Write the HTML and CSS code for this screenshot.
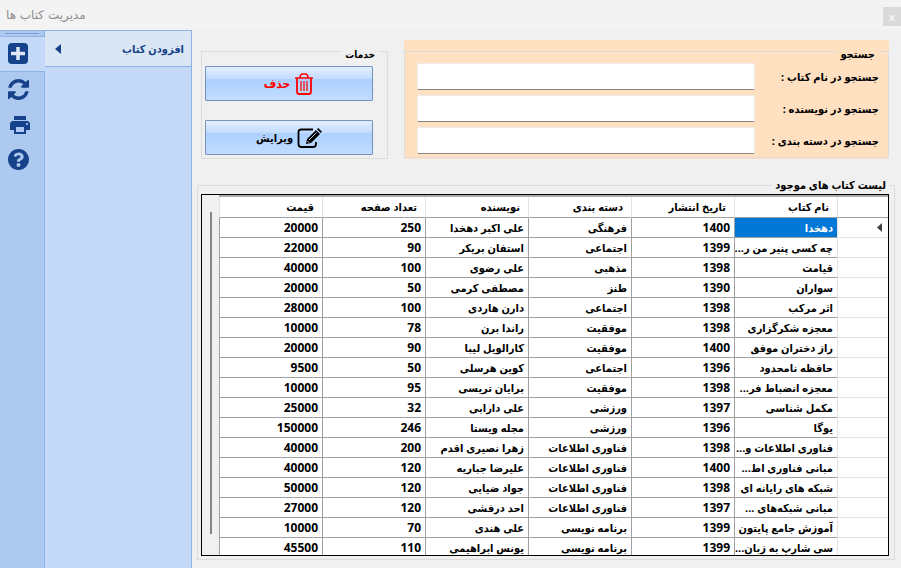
FILE: index.html
```html
<!DOCTYPE html>
<html lang="fa">
<head>
<meta charset="utf-8">
<title>مدیریت کتاب ها</title>
<link rel="stylesheet" href="styles.css">
</head>
<body>
<header class="titlebar">
  <h1 class="title" dir="rtl">مدیریت کتاب ها</h1>
  <button class="close" type="button">x</button>
</header>
<div class="shell">
  <nav class="tabs">
    <div class="grip"></div>
    <button class="tab tab-active" type="button" aria-label="افزودن">
      <svg width="22" height="22" viewBox="0 0 22 22"><rect x="1" y="0" width="20" height="21" rx="4" fill="#15428b"/><path d="M11 4v13M4 10.500h14" stroke="#dfe9f6" stroke-width="3.500"/></svg>
    </button>
    <button class="tab" type="button" aria-label="بازخوانی">
      <svg width="21" height="21" viewBox="0 0 1536 1536"><path fill="#15428b" d="M1511 928q0 5-1 7-64 268-268 434.500T764 1536q-146 0-282.500-55T238 1324l-129 129q-19 19-45 19t-45-19-19-45V960q0-26 19-45t45-19h448q26 0 45 19t19 45-19 45l-137 137q71 66 161 102t187 36q134 0 250-65t186-179q11-17 53-117 8-23 30-23h192q13 0 22.500 9.500t9.500 22.500zm25-800v448q0 26-19 45t-45 19h-448q-26 0-45-19t-19-45 19-45l138-138Q969 256 768 256q-134 0-250 65T332 500q-11 17-53 117-8 23-30 23H50q-13 0-22.500-9.500T18 608v-7q65-268 270-434.500T768 0q146 0 284 55.500T1297 212l130-129q19-19 45-19t45 19 19 45z"/></svg>
    </button>
    <button class="tab tab-print" type="button" aria-label="چاپ">
      <svg width="24" height="24" viewBox="0 0 24 24"><path fill="#15428b" d="M19 8H5c-1.660 0-3 1.340-3 3v6h4v4h12v-4h4v-6c0-1.660-1.340-3-3-3zm-3 11H8v-5h8v5zm3-7c-.55 0-1-.45-1-1s.45-1 1-1 1 .45 1 1-.45 1-1 1zm-1-9H6v4h12V3z"/></svg>
    </button>
    <button class="tab" type="button" aria-label="راهنما">
      <svg width="21" height="21" viewBox="8 8 496 496"><path fill="#15428b" d="M504 256c0 136.997-111.043 248-248 248S8 392.997 8 256C8 119.083 119.043 8 256 8s248 111.083 248 248zM262.655 90c-54.497 0-89.255 22.957-116.549 63.758-3.536 5.286-2.353 12.415 2.715 16.258l34.699 26.310c5.205 3.947 12.621 3.008 16.665-2.122 17.864-22.658 30.113-35.797 57.303-35.797 20.429 0 45.698 13.148 45.698 32.958 0 14.976-12.363 22.667-32.534 33.976C247.128 238.528 216 254.941 216 296v4c0 6.627 5.373 12 12 12h56c6.627 0 12-5.373 12-12v-1.333c0-28.462 83.186-29.647 83.186-106.667 0-58.002-60.165-102-116.531-102zM256 338c-25.365 0-46 20.635-46 46 0 25.364 20.635 46 46 46s46-20.636 46-46c0-25.365-20.635-46-46-46z"/></svg>
    </button>
  </nav>
  <aside class="menu">
    <button class="menu-item" type="button" dir="rtl">
      <span>افزودن کتاب</span>
      <svg width="6" height="10" viewBox="0 0 6 10"><path d="M6 0v10L0 5z" fill="#15428b"/></svg>
    </button>
  </aside>
  <main class="main">
    <div class="top">
      <fieldset class="group services" dir="rtl">
        <legend class="legend legend-small">خدمات</legend>
        <button class="action action-delete" type="button">
          <svg width="20" height="22" viewBox="0 0 20 22" fill="none" stroke="#f00"><path d="M1 5h18M6 5q0-4 3-4h2q3 0 3 4" stroke-width="1.500"/><path d="M3 5v13q0 3 2 3h10q2 0 2-3V5" stroke-width="1.800"/><path d="M7 8v10M10 8v10M13 8v10" stroke-width="1.200"/></svg>
          <span>حذف</span>
        </button>
        <button class="action" type="button">
          <svg width="25" height="20" viewBox="0 0 25 20"><path d="M16 1.500H4Q1.500 1.500 1.500 4v12q0 3 3 3H16q3 0 3-3v-2" fill="none" stroke="#000" stroke-width="1.800"/><path d="M9 16l1-5L19 2l4 4-9 9zM20 1.300L21.300 0 25 3.700l-1.300 1.300z"/><path d="M12 12l7.500-7.500" stroke="#bcd7fd"/><path d="M10.500 13l1.700 1.700" stroke="#bcd7fd"/></svg>
          <span>ویرایش</span>
        </button>
      </fieldset>
      <div class="search">
        <fieldset class="group search-group" dir="rtl">
          <legend class="legend legend-search">جستجو</legend>
          <div class="field"><label for="q-name">جستجو در نام کتاب :</label><input id="q-name" type="text"></div>
          <div class="field"><label for="q-author">جستجو در نویسنده :</label><input id="q-author" type="text"></div>
          <div class="field"><label for="q-cat">جستجو در دسته بندی :</label><input id="q-cat" type="text"></div>
        </fieldset>
      </div>
    </div>
    <section class="list" dir="rtl">
      <h2 class="list-title">لیست کتاب های موجود</h2>
      <div class="grid">
        <table class="books">
          <colgroup><col class="col-head"><col><col><col><col><col><col></colgroup>
          <thead>
            <tr><th class="mark"></th><th>نام کتاب</th><th>تاریخ انتشار</th><th>دسته بندی</th><th>نویسنده</th><th>تعداد صفحه</th><th>قیمت</th></tr>
          </thead>
          <tbody>
            <tr><td class="mark"><svg width="5" height="9" viewBox="0 0 5 9"><path d="M5 0v9L0 4.500z" fill="#404040"/></svg></td><td class="selected">دهخدا</td><td>1400</td><td>فرهنگی</td><td>علی اکبر دهخدا</td><td>250</td><td>20000</td></tr>
            <tr><td class="mark"></td><td>چه کسی پنیر من ر...</td><td>1399</td><td>اجتماعی</td><td>استفان بریکر</td><td>90</td><td>22000</td></tr>
            <tr><td class="mark"></td><td>قیامت</td><td>1398</td><td>مذهبی</td><td>علی رضوی</td><td>100</td><td>40000</td></tr>
            <tr><td class="mark"></td><td>سواران</td><td>1390</td><td>طنز</td><td>مصطفی کرمی</td><td>50</td><td>20000</td></tr>
            <tr><td class="mark"></td><td>اثر مرکب</td><td>1398</td><td>اجتماعی</td><td>دارن هاردی</td><td>100</td><td>28000</td></tr>
            <tr><td class="mark"></td><td>معجزه شکرگزاری</td><td>1398</td><td>موفقیت</td><td>راندا برن</td><td>78</td><td>10000</td></tr>
            <tr><td class="mark"></td><td>راز دختران موفق</td><td>1400</td><td>موفقیت</td><td>کارالویل لیبا</td><td>90</td><td>20000</td></tr>
            <tr><td class="mark"></td><td>حافظه نامحدود</td><td>1396</td><td>اجتماعی</td><td>کوین هرسلی</td><td>50</td><td>9500</td></tr>
            <tr><td class="mark"></td><td>معجزه انضباط فر...</td><td>1398</td><td>موفقیت</td><td>برایان تریسی</td><td>95</td><td>10000</td></tr>
            <tr><td class="mark"></td><td>مکمل شناسی</td><td>1397</td><td>ورزشی</td><td>علی دارابی</td><td>32</td><td>25000</td></tr>
            <tr><td class="mark"></td><td>یوگا</td><td>1396</td><td>ورزشی</td><td>مجله ویستا</td><td>246</td><td>150000</td></tr>
            <tr><td class="mark"></td><td>فناوری اطلاعات و...</td><td>1398</td><td>فناوری اطلاعات</td><td>زهرا نصیری اقدم</td><td>200</td><td>40000</td></tr>
            <tr><td class="mark"></td><td>مبانی فناوری اط...</td><td>1400</td><td>فناوری اطلاعات</td><td>علیرضا جباریه</td><td>120</td><td>40000</td></tr>
            <tr><td class="mark"></td><td>شبکه های رایانه ای</td><td>1398</td><td>فناوری اطلاعات</td><td>جواد ضیایی</td><td>120</td><td>50000</td></tr>
            <tr><td class="mark"></td><td>مبانی شبکه‌های ...</td><td>1397</td><td>فناوری اطلاعات</td><td>احد درفشی</td><td>120</td><td>27000</td></tr>
            <tr><td class="mark"></td><td>آموزش جامع پایتون</td><td>1399</td><td>برنامه نویسی</td><td>علی هندی</td><td>70</td><td>10000</td></tr>
            <tr><td class="mark"></td><td>سی شارپ به زبان...</td><td>1399</td><td>برنامه نویسی</td><td>یونس ابراهیمی</td><td>110</td><td>45500</td></tr>
          </tbody>
        </table>
        <div class="scrollbar"><div class="thumb"></div></div>
      </div>
    </section>
  </main>
</div>
</body>
</html>
```
FILE: styles.css
```css
* { box-sizing: border-box; }
body {
  margin: 0;
  height: 100vh;
  display: flex;
  flex-direction: column;
  overflow: hidden;
  background: #f0f0f0;
  color: #000;
  font: 700 11px/18px "Open Sans", "DejaVu Sans Condensed", "DejaVu Sans", sans-serif;
}
button, input { font: inherit; color: inherit; }
button { padding: 0; border: 0; background: none; }

.titlebar {
  display: flex;
  justify-content: space-between;
  height: 30px;
  background: #f3f3f3;
}
.title {
  margin: 0;
  padding: 6px;
  font: 400 12px/18px "DejaVu Sans", sans-serif;
  color: #8c8c8c;
}
.close {
  width: 18px;
  height: 19px;
  margin-top: 7px;
  line-height: 17px;
  background: #dadada;
  color: #f3f3f3;
}

.shell { flex: 1; display: flex; min-height: 0; }
.tabs {
  width: 45px;
  display: flex;
  flex-direction: column;
  background: #aec9f0;
  border-top: 1px solid #8db2e3;
  border-right: 1px solid #8db2e3;
}
.grip { height: 5px; margin: 0 5px; padding-top: 2px; }
.grip::before { content: ""; display: block; height: 1px; background: #7a9fd8; }
.tab {
  display: flex;
  align-items: center;
  justify-content: center;
  height: 35px;
  padding-right: 8px;
}
.tab-print { padding-right: 4px; }
.tab-active {
  height: 36px;
  padding-right: 9px;
  background: #c4d9f7;
  margin-right: -1px;
  border-top: 1px solid #8db2e3;
  border-bottom: 1px solid #8db2e3;
}
.menu {
  width: 147px;
  background: #c4d9f7;
  border-top: 1px solid #8db2e3;
  border-right: 1px solid #8db2e3;
}
.menu-item {
  width: 100%;
  height: 36px;
  display: flex;
  align-items: center;
  justify-content: space-between;
  padding: 0 7px 0 10px;
  background: #dbe6f4;
  border-bottom: 1px solid #8db2e3;
  color: #15428b;
}

.main { flex: 1; min-width: 0; display: flex; flex-direction: column; padding: 10px 6px 8px 5px; }
.top { display: flex; align-items: flex-end; gap: 16px; height: 119px; margin: 0 6px 0 4px; }
.group { margin: 0; padding: 0; border: 1px solid #dcdcdc; min-width: 0; }
.legend { margin-right: 8px; padding: 5px 4px 0; line-height: 18px; }
.legend-small { font-size: 10px; }
.legend-search { margin-right: 0; }
.services { width: 187px; padding-left: 3px; }
.action {
  display: flex;
  align-items: center;
  justify-content: center;
  gap: 4px;
  width: 168px;
  height: 35px;
  margin: 3px auto 19px 0;
  border: 1px solid #7593bd;
  border-radius: 1px;
  background: linear-gradient(#e1eefe, #c4dcfd 36%, #acd0ff 38%, #c2dcff);
}
.action:last-child { margin: 0 auto 3px 0; }
.action-delete { color: #f00; font-size: 12px; }

.search { flex: 1; background: #ffe0c0; padding: 0 0 1px; }
.search-group { padding: 0 9px 3px 12px; }
.field { display: flex; align-items: center; margin-bottom: 5px; }
.field:last-child { margin-bottom: 0; }
.field label { width: 124px; white-space: nowrap; }
.field input {
  flex: 1;
  min-width: 0;
  height: 27px;
  padding: 0 4px;
  border: 1px solid #ececec;
  border-bottom-color: #858585;
  border-radius: 2px;
  background: #fff;
}

.list {
  flex: 1;
  min-height: 0;
  display: flex;
  flex-direction: column;
  margin-top: 26px;
  padding: 0 5px 3px 3px;
  border: 1px solid #dcdcdc;
}
.list-title {
  align-self: flex-start;
  margin: -10px 0 0;
  padding: 0 3px;
  background: #f0f0f0;
  font-size: 11px;
  line-height: 18px;
}
.grid {
  flex: 1;
  min-height: 0;
  display: flex;
  overflow: hidden;
  border: 1px solid #000;
}
.books {
  flex: 1;
  min-width: 0;
  width: 100%;
  table-layout: fixed;
  border-spacing: 0;
  align-self: flex-start;
  background: #fff;
  border-top: 2px solid #ababab;
}
.col-head { width: 51px; }
th, td {
  height: 20px;
  padding: 0 4px;
  overflow: hidden;
  white-space: nowrap;
  text-align: right;
  line-height: 19px;
  border-left: 1px solid #a0a0a0;
  border-bottom: 1px solid #a0a0a0;
}
td:nth-child(3), td:nth-child(6), td:nth-child(7) { font-size: 12px; }
th { height: 21px; padding: 0 8px 1px 4px; border-left-color: #e3e3e3; }
.mark { border-left-color: #e3e3e3; border-bottom-color: #e3e3e3; }
.mark svg { display: block; margin-right: 2px; }
thead .mark { border-bottom-color: #a0a0a0; }
.selected { background: #0078d7; color: #fff; }
.scrollbar { width: 17px; padding: 17px 7px 21px; }
.thumb { width: 2px; height: 100%; margin: 0 auto; background: #868686; }
```
